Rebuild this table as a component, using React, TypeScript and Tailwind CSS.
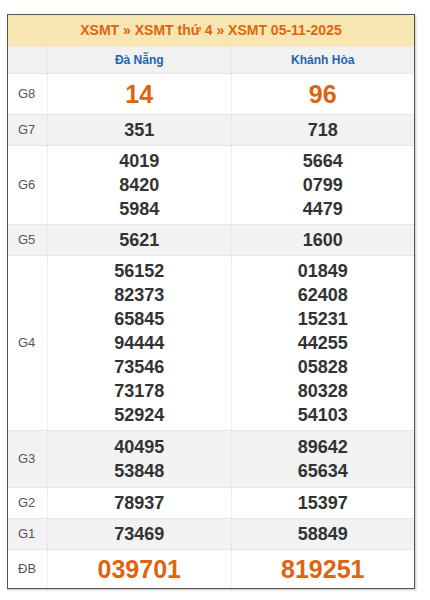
import React from "react";

type Row = { label: string; a: string[]; b: string[]; big?: boolean; alt?: boolean; pad?: string };

const rows: Row[] = [
  { label: "G8", a: ["14"], b: ["96"], big: true },
  { label: "G7", a: ["351"], b: ["718"], alt: true },
  { label: "G6", a: ["4019", "8420", "5984"], b: ["5664", "0799", "4479"] },
  { label: "G5", a: ["5621"], b: ["1600"], alt: true },
  {
    label: "G4",
    a: ["56152", "82373", "65845", "94444", "73546", "73178", "52924"],
    b: ["01849", "62408", "15231", "44255", "05828", "80328", "54103"],
  },
  { label: "G3", a: ["40495", "53848"], b: ["89642", "65634"], alt: true, pad: "py-[4px]" },
  { label: "G2", a: ["78937"], b: ["15397"] },
  { label: "G1", a: ["73469"], b: ["58849"], alt: true },
  { label: "ĐB", a: ["039701"], b: ["819251"], big: true, pad: "py-[4px]" },
];

function Cell({ nums, big, pad }: { nums: string[]; big?: boolean; pad: string }) {
  return (
    <div className={`flex flex-col items-center justify-center border-l border-dotted border-[#e0e0e0] ${pad}`}>
      {nums.map((n) =>
        big ? (
          <span key={n} className="text-[25px] leading-[30px] font-bold text-[#de6410]">
            {n}
          </span>
        ) : (
          <span key={n} className="text-[18px] leading-[24px] font-bold text-[#333]">
            {n}
          </span>
        )
      )}
    </div>
  );
}

export default function App() {
  return (
    <div className="bg-white min-h-[600px] pt-[14px] px-[7px]" style={{ fontFamily: '"Liberation Sans", Arial, sans-serif' }}>
      <div className="w-[408px] border border-[#555] shadow-[1px_1px_2px_rgba(0,0,0,0.25)]">
        <div className="h-[31px] bg-[#f8e6b2] flex items-center justify-center text-[14px] font-bold text-[#e0640f]">
          XSMT » XSMT thứ 4 » XSMT 05-11-2025
        </div>
        <div className="grid grid-cols-[39px_1fr_1fr] h-[27px] bg-[#f1f1f1] border-t border-[#e6e6e6] text-[12px] font-bold text-[#1e64b4]">
          <div />
          <div className="flex items-center justify-center border-l border-dotted border-[#e0e0e0]">Đà Nẵng</div>
          <div className="flex items-center justify-center border-l border-dotted border-[#e0e0e0]">Khánh Hòa</div>
        </div>
        {rows.map((r) => {
          const pad = r.pad ?? (r.big ? "py-[5px]" : "py-[3px]");
          return (
            <div
              key={r.label}
              className={`grid grid-cols-[39px_1fr_1fr] border-t border-[#e6e6e6] ${r.alt ? "bg-[#f2f2f2]" : "bg-white"}`}
            >
              <div className="flex items-center pl-[10px] text-[13px] text-[#555]">{r.label}</div>
              <Cell nums={r.a} big={r.big} pad={pad} />
              <Cell nums={r.b} big={r.big} pad={pad} />
            </div>
          );
        })}
      </div>
    </div>
  );
}
